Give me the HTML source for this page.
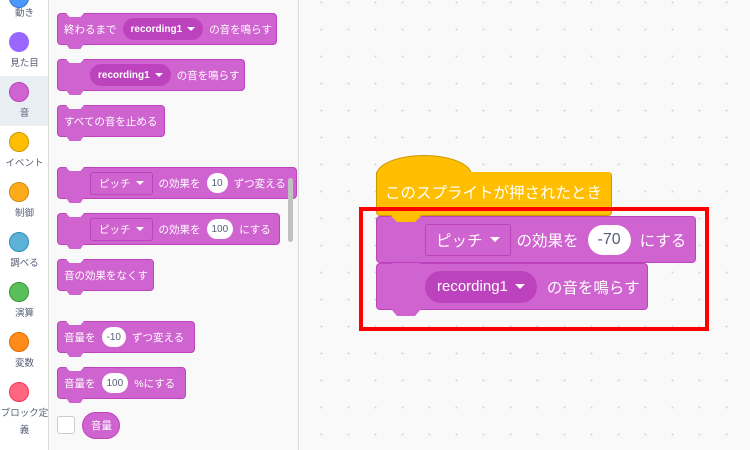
<!DOCTYPE html>
<html><head><meta charset="utf-8"><style>
*{margin:0;padding:0;box-sizing:border-box}
body{width:750px;height:450px;overflow:hidden;background:#f9f9f9;font-family:"Liberation Sans","Noto Sans CJK JP",sans-serif;position:relative}
.cat{position:absolute;left:0;top:0;width:49px;height:450px;background:#fff;border-right:1px solid #dcdcdc}
.c{position:absolute;left:9px;width:20px;height:20px;border-radius:50%}
.cl{position:absolute;left:0;width:49px;text-align:center;font-size:9.5px;color:#575e75;white-space:nowrap}
.pal{position:absolute;left:49px;top:0;width:250px;height:450px;background:#f9f9f9;border-right:1px solid #dcdcdc;overflow:hidden}
.ws{position:absolute;left:300px;top:0;width:450px;height:450px;background-color:#f9f9f9;background-image:radial-gradient(circle,#d4d4d4 0.8px,transparent 1.2px);background-size:27px 27px;background-position:8px 16px}
.b{position:absolute;background:#cf63cf;border:1px solid #bd42bd;border-radius:4px;color:#fff;font-size:10.5px;display:flex;align-items:center;padding-left:6px;white-space:nowrap}
.b .tn{position:absolute;top:-1px;left:8px;width:18px;height:4px;background:#f9f9f9;clip-path:polygon(0 0,100% 0,80% 100%,20% 100%)}
.b .bn{position:absolute;bottom:-5px;left:8px;width:18px;height:5px;background:#cf63cf;clip-path:polygon(0 0,100% 0,80% 100%,20% 100%)}
.dd{background:#bd42bd;border-radius:12px;height:22px;padding:0 8px;display:inline-flex;align-items:center;font-weight:bold;font-size:10px;margin:0 6px}
.dr{border:1px solid #bd42bd;border-radius:3px;height:23px;padding:0 8px;display:inline-flex;align-items:center;margin:0 6px 0 0}
.ov{background:#fff;color:#575e75;border-radius:12px;height:20px;padding:0 5px;display:inline-flex;align-items:center;margin:0 6px;font-size:10px}
.ar{display:inline-block;width:0;height:0;border-left:4px solid transparent;border-right:4px solid transparent;border-top:4px solid #fff;margin-left:5px}
.w{font-size:15.5px}
.w .ar{border-left-width:5px;border-right-width:5px;border-top-width:5px;margin-left:7px}
.w .tn{left:14px;width:30px;height:6px}
.w .bn{left:14px;width:30px;height:7px;bottom:-7px}
</style></head><body>
<div class="cat">
 <div class="c" style="top:-12px;background:#4c97ff;border:1px solid #3373cc"></div><div class="cl" style="top:5px">動き</div>
 <div class="c" style="top:32px;background:#9966ff"></div><div class="cl" style="top:55px">見た目</div>
 <div style="position:absolute;left:0;top:76px;width:48px;height:50px;background:#e9eef2"></div>
 <div class="c" style="top:82px;background:#cf63cf;border:1px solid #bd42bd"></div><div class="cl" style="top:105px">音</div>
 <div class="c" style="top:132px;background:#ffbf00;border:1px solid #cc9900"></div><div class="cl" style="top:155px">イベント</div>
 <div class="c" style="top:182px;background:#ffab19;border:1px solid #cf8b17"></div><div class="cl" style="top:205px">制御</div>
 <div class="c" style="top:232px;background:#5cb1d6;border:1px solid #2e8eb8"></div><div class="cl" style="top:255px">調べる</div>
 <div class="c" style="top:282px;background:#59c059;border:1px solid #389438"></div><div class="cl" style="top:305px">演算</div>
 <div class="c" style="top:332px;background:#ff8c1a;border:1px solid #db6e00"></div><div class="cl" style="top:355px">変数</div>
 <div class="c" style="top:382px;background:#ff6680;border:1px solid #ff3355"></div><div class="cl" style="top:405px">ブロック定</div><div class="cl" style="top:422px">義</div>
</div>
<div class="pal">
 <div class="b" style="left:8px;top:13px;width:220px;height:32px"><span class="tn"></span><span class="bn"></span>終わるまで<span class="dd">recording1<span class="ar"></span></span>の音を鳴らす</div>
 <div class="b" style="left:8px;top:59px;width:188px;height:32px;padding-left:32px"><span class="tn"></span><span class="bn"></span><span class="dd" style="margin-left:0">recording1<span class="ar"></span></span>の音を鳴らす</div>
 <div class="b" style="left:8px;top:105px;width:108px;height:32px"><span class="tn"></span><span class="bn"></span>すべての音を止める</div>
 <div class="b" style="left:8px;top:167px;width:240px;height:32px;padding-left:32px"><span class="tn"></span><span class="bn"></span><span class="dr">ピッチ<span class="ar"></span></span>の効果を<span class="ov">10</span>ずつ変える</div>
 <div class="b" style="left:8px;top:213px;width:223px;height:32px;padding-left:32px"><span class="tn"></span><span class="bn"></span><span class="dr">ピッチ<span class="ar"></span></span>の効果を<span class="ov">100</span>にする</div>
 <div class="b" style="left:8px;top:259px;width:97px;height:32px"><span class="tn"></span><span class="bn"></span>音の効果をなくす</div>
 <div class="b" style="left:8px;top:321px;width:138px;height:32px"><span class="tn"></span><span class="bn"></span>音量を<span class="ov">-10</span>ずつ変える</div>
 <div class="b" style="left:8px;top:367px;width:129px;height:32px"><span class="tn"></span><span class="bn"></span>音量を<span class="ov">100</span>%にする</div>
 <div style="position:absolute;left:8px;top:416px;width:18px;height:18px;background:#fff;border:1px solid #ccc;border-radius:3px"></div>
 <div class="b" style="left:33px;top:412px;width:38px;height:27px;border-radius:14px;padding-left:8px">音量</div>
 <div style="position:absolute;left:239px;top:178px;width:5px;height:64px;background:#c1c1c1;border-radius:3px"></div>
</div>
<div class="ws"></div>
<div style="position:absolute;left:376px;top:155px;width:96px;height:50px;border-radius:50% 50% 0 0/40% 40% 0 0;background:#ffbf00;border:1px solid #cc9900"></div>
<div class="b w" style="left:376px;top:172px;width:236px;height:44px;background:#ffbf00;border-color:#cc9900;border-top:none;border-radius:0 4px 4px 4px;padding-bottom:4px;padding-left:8px">このスプライトが押されたとき<span class="bn" style="background:#ffbf00"></span></div>
<div class="b w" style="left:376px;top:216px;width:320px;height:47px;padding-left:48px"><span class="tn" style="background:#ffbf00"></span><span class="dr" style="height:32px;padding:0 10px">ピッチ<span class="ar"></span></span>の効果を<span class="ov" style="height:30px;border-radius:15px;padding:0 10px;font-size:16px;margin:0 9px">-70</span>にする</div>
<div class="b w" style="left:376px;top:263px;width:272px;height:47px;padding-left:48px"><span class="tn" style="background:#cf63cf;top:-1px"></span><span class="bn"></span><span class="dd" style="height:32px;border-radius:16px;padding:0 12px;font-size:15px;font-weight:normal;margin:0 10px 0 0">recording1<span class="ar"></span></span>の音を鳴らす</div>
<div style="position:absolute;left:359px;top:207px;width:350px;height:124px;border:4px solid #ff0000"></div>
</body></html>
